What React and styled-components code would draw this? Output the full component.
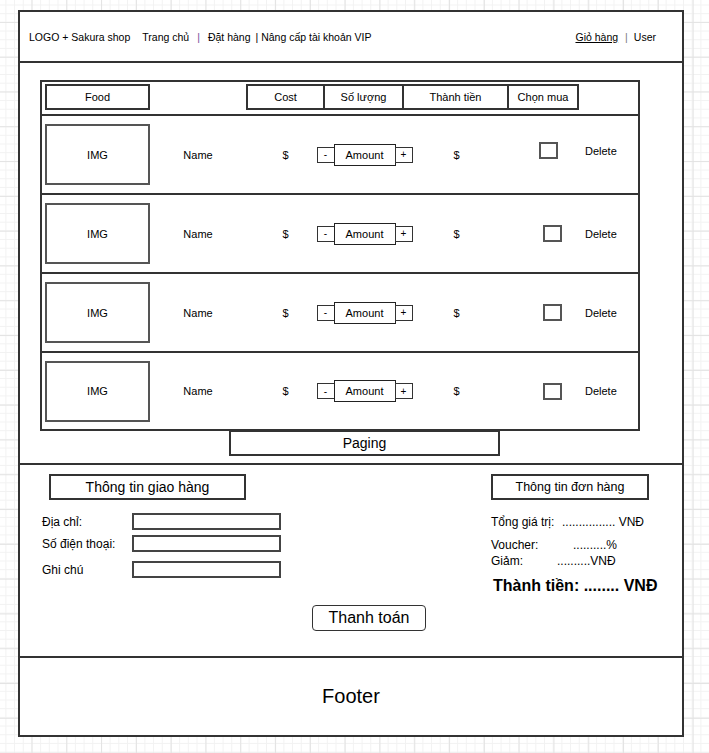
import styled, { createGlobalStyle } from "styled-components";

const GlobalStyle = createGlobalStyle`
  body {
    margin: 0;
    font-family: "Liberation Sans", Arial, sans-serif;
    color: #000;
    background-color: #fff;
    background-image:
      linear-gradient(to right, #e3e3e3 1px, transparent 1px),
      linear-gradient(to bottom, #e3e3e3 1px, transparent 1px),
      linear-gradient(to right, #f2f2f2 1px, transparent 1px),
      linear-gradient(to bottom, #f2f2f2 1px, transparent 1px);
    background-size: 34.8px 34.8px, 34.8px 34.8px, 8.7px 8.7px, 8.7px 8.7px;
    background-position: 31.5px 21.9px, 31.5px 21.9px, 5.4px 4.5px, 5.4px 4.5px;
  }
`;

const Frame = styled.div`
  box-sizing: border-box;
  margin: 10px 0 0 18px;
  width: 666px;
  height: 727px;
  border: 2px solid #333;
  background: #fff;
  display: flex;
  flex-direction: column;
`;

const Header = styled.header`
  box-sizing: border-box;
  height: 51px;
  border-bottom: 2px solid #333;
  display: flex;
  align-items: center;
  justify-content: space-between;
  padding: 0 26px 0 9px;
  font-size: 10.5px;
`;

const Nav = styled.nav`
  display: flex;
  align-items: center;
`;

const NavItem = styled.span`
  margin-left: ${(p) => p.$gap || 0}px;
  color: ${(p) => p.$color || "#000"};
  text-decoration: ${(p) => (p.$active ? "underline" : "none")};
  white-space: pre;
`;

const Main = styled.section`
  box-sizing: border-box;
  height: 402px;
  border-bottom: 2px solid #333;
  padding: 17px 0 0 20px;
`;

const Table = styled.div`
  box-sizing: border-box;
  width: 600px;
  border: 2px solid #333;
`;

const Row = styled.div`
  display: grid;
  grid-template-columns: 105px 96px 79px 79px 105px 70px 1fr;
  padding-left: 3px;
  height: ${(p) => (p.$head ? 30 : p.$last ? 76 : 77)}px;
  align-items: ${(p) => (p.$head ? "start" : "center")};
  padding-top: ${(p) => (p.$head ? 2 : 0)}px;
  border-bottom: ${(p) => (p.$last ? "none" : "2px solid #333")};
  font-size: 11px;
`;

const HeadCell = styled.div`
  grid-column: ${(p) => p.$col};
  box-sizing: border-box;
  height: 26px;
  border: 2px solid #333;
  margin-left: ${(p) => (p.$join ? -2 : 0)}px;
  display: flex;
  align-items: center;
  justify-content: center;
`;

const ImgBox = styled.div`
  box-sizing: border-box;
  height: 61px;
  border: 2px solid #555;
  display: flex;
  align-items: center;
  justify-content: center;
`;

const Cell = styled.div`
  display: flex;
  align-items: center;
  justify-content: ${(p) => p.$align || "center"};
  padding-left: ${(p) => p.$pad || 0}px;
  margin-top: ${(p) => (p.$raise ? -8 : 0)}px;
`;

const Qty = styled.div`
  display: flex;
  align-items: center;
  justify-content: center;
  width: 97px;
  margin: 0 -9px;
`;

const StepBtn = styled.div`
  box-sizing: border-box;
  width: 18px;
  height: 16px;
  border: 1.5px solid #333;
  display: flex;
  align-items: center;
  justify-content: center;
  font-size: 10px;
`;

const AmountBox = styled.div`
  box-sizing: border-box;
  width: 62px;
  height: 22px;
  border: 1.5px solid #222;
  margin: 0 -1px;
  display: flex;
  align-items: center;
  justify-content: center;
`;

const Checkbox = styled.div`
  box-sizing: border-box;
  width: 19px;
  height: 17px;
  border: 2px solid #555;
`;

const Paging = styled.div`
  box-sizing: border-box;
  width: 271px;
  height: 26px;
  margin: -1px 0 0 189px;
  border: 2px solid #333;
  display: flex;
  align-items: center;
  justify-content: center;
  font-size: 14px;
`;

const Checkout = styled.section`
  box-sizing: border-box;
  height: 193px;
  border-bottom: 2px solid #333;
  padding-top: 9px;
  display: flex;
  flex-direction: column;
`;

const Columns = styled.div`
  display: flex;
  justify-content: space-between;
  align-items: flex-start;
  padding: 0 30px 0 22px;
`;

const Column = styled.div`
  display: flex;
  flex-direction: column;
  width: ${(p) => p.$width}px;
`;

const TitleBox = styled.div`
  box-sizing: border-box;
  width: ${(p) => p.$width}px;
  height: 26px;
  margin-left: ${(p) => p.$offset || 0}px;
  border: 2px solid #333;
  display: flex;
  align-items: center;
  justify-content: center;
  font-size: ${(p) => p.$size}px;
`;

const FormRow = styled.label`
  display: grid;
  grid-template-columns: 90px 149px;
  align-items: center;
  margin-top: ${(p) => p.$top}px;
  font-size: 12px;
`;

const Field = styled.div`
  box-sizing: border-box;
  height: 17px;
  border: 2px solid #444;
`;

const SummaryRow = styled.div`
  display: flex;
  margin-top: ${(p) => p.$top}px;
  font-size: 12px;
  line-height: 16px;
  white-space: pre;
`;

const SummaryLabel = styled.span`
  width: ${(p) => p.$width}px;
`;

const Total = styled.div`
  margin: 7px 0 0 2px;
  font-size: 16px;
  font-weight: bold;
  line-height: 20px;
  white-space: nowrap;
`;

const PayButton = styled.button`
  box-sizing: border-box;
  align-self: flex-start;
  margin: 9px 0 0 292px;
  width: 114px;
  height: 26px;
  border: 1.5px solid #333;
  border-radius: 4px;
  background: #fff;
  font-family: inherit;
  font-size: 16px;
  color: #000;
  padding: 0;
`;

const Footer = styled.footer`
  flex: 1;
  display: flex;
  align-items: center;
  justify-content: center;
  font-size: 20px;
`;

const items = [0, 1, 2, 3];

export default function App() {
  return (
    <>
      <GlobalStyle />
      <Frame>
        <Header>
          <Nav>
            <NavItem>LOGO + Sakura shop</NavItem>
            <NavItem $gap={12}>Trang chủ</NavItem>
            <NavItem $gap={8} $color="#7a4e9a">|</NavItem>
            <NavItem $gap={8}>Đặt hàng</NavItem>
            <NavItem $gap={5}>| Nâng cấp tài khoản VIP</NavItem>
          </Nav>
          <Nav>
            <NavItem $active>Giỏ hàng</NavItem>
            <NavItem $gap={7} $color="#777">|</NavItem>
            <NavItem $gap={6}>User</NavItem>
          </Nav>
        </Header>

        <Main>
          <Table>
            <Row $head>
              <HeadCell $col={1}>Food</HeadCell>
              <HeadCell $col={3}>Cost</HeadCell>
              <HeadCell $col={4} $join>Số lượng</HeadCell>
              <HeadCell $col={5} $join>Thành tiền</HeadCell>
              <HeadCell $col={6} $join>Chọn mua</HeadCell>
            </Row>
            {items.map((i) => (
              <Row key={i} $last={i === items.length - 1}>
                <ImgBox>IMG</ImgBox>
                <Cell>Name</Cell>
                <Cell>$</Cell>
                <Cell>
                  <Qty>
                    <StepBtn>-</StepBtn>
                    <AmountBox>Amount</AmountBox>
                    <StepBtn>+</StepBtn>
                  </Qty>
                </Cell>
                <Cell>$</Cell>
                <Cell $align="flex-start" $pad={i === 0 ? 30 : 34} $raise={i === 0}>
                  <Checkbox />
                </Cell>
                <Cell $align="flex-start" $pad={6} $raise={i === 0}>
                  Delete
                </Cell>
              </Row>
            ))}
          </Table>
          <Paging>Paging</Paging>
        </Main>

        <Checkout>
          <Columns>
            <Column $width={240}>
              <TitleBox $width={197} $offset={7} $size={14}>
                Thông tin giao hàng
              </TitleBox>
              <FormRow $top={13}>
                Địa chỉ:
                <Field />
              </FormRow>
              <FormRow $top={5}>
                Số điện thoại:
                <Field />
              </FormRow>
              <FormRow $top={9}>
                Ghi chú
                <Field />
              </FormRow>
            </Column>
            <Column $width={161}>
              <TitleBox $width={158} $size={12.5}>
                Thông tin đơn hàng
              </TitleBox>
              <SummaryRow $top={14}>
                <SummaryLabel $width={71}>Tổng giá trị:</SummaryLabel>
                ................ VNĐ
              </SummaryRow>
              <SummaryRow $top={7}>
                <SummaryLabel $width={82}>Voucher:</SummaryLabel>
                ..........%
              </SummaryRow>
              <SummaryRow $top={0}>
                <SummaryLabel $width={66}>Giảm:</SummaryLabel>
                ..........VNĐ
              </SummaryRow>
              <Total>Thành tiền: ........ VNĐ</Total>
            </Column>
          </Columns>
          <PayButton>Thanh toán</PayButton>
        </Checkout>

        <Footer>Footer</Footer>
      </Frame>
    </>
  );
}
